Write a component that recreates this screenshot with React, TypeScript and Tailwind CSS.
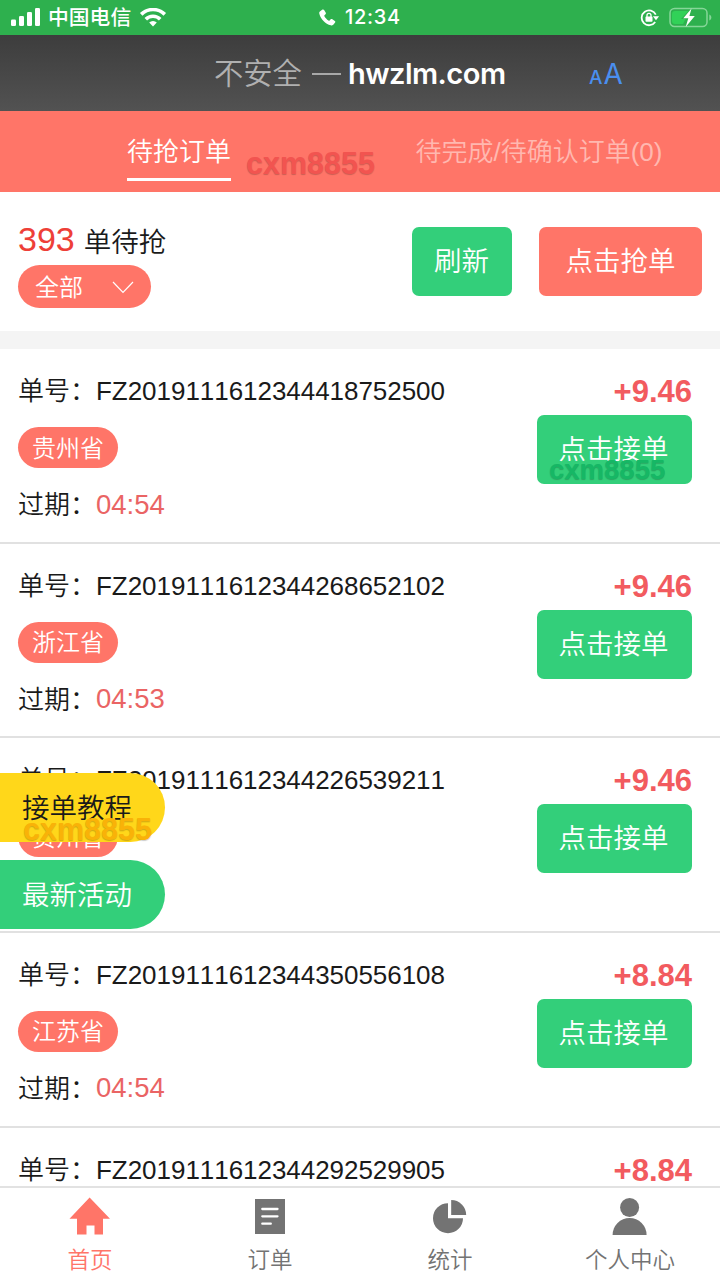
import type { ReactNode } from "react";

interface Order {
  no: string;
  province: string;
  expire: string;
  amount: string;
}

const orders: Order[] = [
  { no: "FZ2019111612344418752500", province: "贵州省", expire: "04:54", amount: "+9.46" },
  { no: "FZ2019111612344268652102", province: "浙江省", expire: "04:53", amount: "+9.46" },
  { no: "FZ2019111612344226539211", province: "贵州省", expire: "04:53", amount: "+9.46" },
  { no: "FZ2019111612344350556108", province: "江苏省", expire: "04:54", amount: "+8.84" },
  { no: "FZ2019111612344292529905", province: "", expire: "", amount: "+8.84" },
];

function StatusBar() {
  return (
    <div className="flex h-[35px] shrink-0 items-center bg-[#2eb04e] px-[10px] text-white">
      <div className="flex flex-1 items-center">
        <svg width="31" height="19" viewBox="0 0 31 19" fill="currentColor">
          <rect x="1" y="11.5" width="5" height="6.5" rx="1.3" />
          <rect x="9" y="8" width="5" height="10" rx="1.3" />
          <rect x="17" y="4" width="5" height="14" rx="1.3" />
          <rect x="25" y="0" width="5" height="18" rx="1.3" />
        </svg>
        <span className="ml-[7px] text-[20.8px] leading-[30px] font-medium">中国电信</span>
        <svg className="ml-[8px]" width="28" height="20" viewBox="0 0 28 20">
          <g fill="none" stroke="currentColor" strokeWidth="3.6">
            <path d="M2.2 6.4a16.8 16.8 0 0 1 23.6 0" />
            <path d="M6.8 11.2a10.2 10.2 0 0 1 14.4 0" />
          </g>
          <path d="M14 18.5l-3.8-3.9a5.500 5.500 0 0 1 7.600 0z" fill="currentColor" />
        </svg>
      </div>
      <div className="flex items-center">
        <svg width="17" height="17" viewBox="0 0 17 17" fill="currentColor">
          <path d="M1.2 2.2 3.5.6c.6-.4 1.2-.2 1.6.4l1.7 2.8c.3.6.2 1.1-.3 1.5l-1 .9c-.3.3-.3.6-.1 1 .9 1.7 2.3 3.2 4.1 4.3.4.3.8.2 1.1-.1l.9-1c.4-.5.9-.6 1.5-.3l2.8 1.8c.6.4.7 1 .3 1.5l-1.6 2.2c-.5.7-1.4 1-2.7.6C6.2 14.8 1.8 10.1.4 4.9c-.4-1.3-.1-2.2.8-2.7z" />
        </svg>
        <span className="ml-[9px] -mt-px font-[Inter] text-[20px] leading-[30px] font-medium tracking-[0.7px]">12:34</span>
      </div>
      <div className="flex flex-1 items-center justify-end">
        <svg width="20" height="18" viewBox="0 0 20 18">
          <path d="M15.2 13A7.4 7.4 0 1 1 15.800 5.700" fill="none" stroke="currentColor" strokeWidth="1.8" />
          <path d="M12.9 7.300h6.200L16 11.200z" fill="currentColor" />
          <rect x="5.500" y="7.600" width="7" height="5.200" rx="0.8" fill="currentColor" />
          <path d="M7 8V6.300a2 2 0 0 1 4 0V8" fill="none" stroke="currentColor" strokeWidth="1.300" />
        </svg>
        <svg className="-mr-[2px] ml-[9px]" width="43" height="22" viewBox="0 0 43 22">
          <rect x="1" y="1.500" width="37" height="18" rx="4.500" fill="none" stroke="#85d698" strokeWidth="1.500" />
          <path d="M40.300 7.500v6c1.400-.5 2-1.600 2-3s-.6-2.500-2-3z" fill="#85d698" />
          <path d="M6 4h13.500L12 12h4.500l-2.500 5H6a3 3 0 0 1-3-3V7a3 3 0 0 1 3-3z" fill="#31d158" />
          <path d="M22.500 1.500 14.300 11.300h5l-2.600 8.700 9.100-11h-5.400z" fill="white" />
        </svg>
      </div>
    </div>
  );
}

function AddressBar() {
  return (
    <div className="flex h-[76px] shrink-0 items-center bg-linear-to-b from-[#3d3d3d] to-[#525252] pt-[2px] pl-[214px]">
      <span className="text-[29.3px] leading-[40px] font-[350] text-[#b0b0b0]">不安全</span>
      <span className="ml-[10px] h-[2px] w-[29px] bg-[#a8a8a8]" />
      <span className="ml-[7px] w-[160px] font-[Inter] text-[29px] leading-[40px] font-semibold tracking-[-0.5px] text-white">
        hwzlm.com
      </span>
      <span className="mt-[4px] ml-[81px] flex items-baseline font-[Inter] leading-[40px] text-[#4a8ff0]">
        <span className="text-[19px] font-medium">A</span>
        <span className="ml-px text-[28px]">A</span>
      </span>
    </div>
  );
}

function Watermark({ className }: { className: string }) {
  return (
    <span
      className={`pointer-events-none absolute z-20 leading-none font-bold [text-shadow:0_1px_1px_rgba(0,0,0,0.2)] ${className}`}
    >
      cxm8855
    </span>
  );
}

function Tabs() {
  return (
    <div className="relative flex h-[81px] shrink-0 bg-[#ff7568] text-[26px]">
      <div className="flex flex-1 justify-center pr-[2px]">
        <div className="mt-[20px] h-[50px] border-b-[3px] border-white pt-px leading-[40px] font-[350] text-white">
          待抢订单
        </div>
      </div>
      <div className="flex flex-1 justify-center pr-[2px]">
        <div className="mt-[21px] h-[49px] leading-[40px] font-[350] text-[#ffb8b0]">待完成/待确认订单(0)</div>
      </div>
      <Watermark className="top-[37px] left-[246px] text-[30.5px] text-[#f25450]" />
    </div>
  );
}

function Summary() {
  return (
    <div className="flex h-[157px] shrink-0 items-start border-b-[18px] border-[#f4f4f4] px-[18px]">
      <div className="flex-1 pt-[29px]">
        <div className="flex h-[40px] items-center">
          <span className="-mt-[4px] text-[34px] leading-[40px] text-[#ee3f38]">393</span>
          <span className="ml-[9px] pt-[3px] text-[27.5px] leading-[40px] font-[350] text-[#1a1a1a]">单待抢</span>
        </div>
        <button
          type="button"
          className="mt-[4px] flex h-[43px] w-[133px] items-center rounded-full bg-[#ff7568] pt-[2px] pl-[17px] text-[24px] font-[350] text-white"
        >
          全部
          <svg className="ml-[29px]" width="22" height="13" viewBox="0 0 22 13">
            <path d="M1 1l10 10.5L21 1" fill="none" stroke="white" strokeWidth="1.2" />
          </svg>
        </button>
      </div>
      <button
        type="button"
        className="mt-[35px] h-[69px] w-[100px] rounded-[7px] bg-[#33cf7a] pr-[8px] pl-[7px] text-[27.5px] font-[350] text-white"
      >
        刷新
      </button>
      <button
        type="button"
        className="mt-[35px] ml-[27px] h-[69px] w-[163px] rounded-[7px] bg-[#ff7568] text-[27.5px] font-[350] text-white"
      >
        点击抢单
      </button>
    </div>
  );
}

function OrderRow({ order, children }: { order: Order; children?: ReactNode }) {
  return (
    <div className="relative flex h-[194.67px] shrink-0 justify-between border-b-2 border-[#e1e1e1] pr-[28px] pl-[18px]">
      <div className="pt-[24px] text-[26px] leading-[36px] font-[350] text-[#1a1a1a]">
        <div className="whitespace-nowrap">
          单号：<span className="tracking-[-0.04px]">{order.no}</span>
        </div>
        {order.province && (
          <div className="mt-[18px] flex h-[41px] w-[100px] items-center justify-center rounded-full bg-[#ff7568] pt-[2px] text-[24px] text-white">
            {order.province}
          </div>
        )}
        {order.expire && (
          <div className="mt-[19px] flex items-center">
            <span>过期：</span>
            <span className="-mt-px text-[27.5px] text-[#ea6464]">{order.expire}</span>
          </div>
        )}
      </div>
      <div className="flex flex-col items-end pt-[25px]">
        <span className="text-[31px] leading-[36px] font-bold text-[#f25b5f]">{order.amount}</span>
        <button
          type="button"
          className="mt-[5px] h-[69px] w-[155px] rounded-[7px] bg-[#33cf7a] pr-[2px] text-[27.5px] font-[350] text-white"
        >
          点击接单
        </button>
      </div>
      {children}
    </div>
  );
}

const navItems = [
  {
    label: "首页",
    icon: <path d="M19.6.5 40 21.8H33V37.5h-8.500v-9h-8v9H7V21.800H-.5z" />,
  },
  {
    label: "订单",
    icon: (
      <>
        <rect x="5" y="2" width="30" height="35" />
        <path d="M12.3 12h15.200M12.3 19.300h15.200M12.3 26.700h8.500" stroke="white" strokeWidth="2.3" strokeLinecap="round" />
      </>
    ),
  },
  {
    label: "统计",
    icon: (
      <>
        <path d="M18 6.200V21.200H33A15 15 0 1 1 18 6.200z" />
        <path d="M21.2 3A15 15 0 0 1 36.200 18h-15z" />
      </>
    ),
  },
  {
    label: "个人中心",
    icon: (
      <>
        <circle cx="19.6" cy="10.500" r="9.500" />
        <path d="M2.6 38a17 17 0 0 1 34 0z" />
      </>
    ),
  },
];

function BottomNav() {
  return (
    <div className="z-10 flex h-[94px] shrink-0 border-t-2 border-[#e2e2e2] bg-white">
      {navItems.map((item, i) => (
        <div
          key={item.label}
          className={`flex flex-1 flex-col items-center pt-[9px] ${i === 0 ? "text-[#ff7568]" : "text-[#737373]"}`}
        >
          <svg width="40" height="39" viewBox="0 0 40 39" fill="currentColor" className="overflow-visible">
            {item.icon}
          </svg>
          <span className="mt-[9px] text-[22.5px] leading-[32px] font-[350]">{item.label}</span>
        </div>
      ))}
    </div>
  );
}

export default function App() {
  return (
    <div className="relative flex h-[1280px] w-[720px] flex-col overflow-hidden bg-white font-['Liberation_Sans','Noto_Sans_CJK_SC',sans-serif] [font-kerning:none]">
      <StatusBar />
      <AddressBar />
      <Tabs />
      <Summary />
      <div className="flex min-h-0 flex-1 flex-col overflow-hidden">
        {orders.map((order, i) => (
          <OrderRow key={order.no} order={order}>
            {i === 0 && <Watermark className="top-[107px] left-[549px] text-[27.5px] text-[#16b765]" />}
          </OrderRow>
        ))}
      </div>
      <BottomNav />

      {/* 悬浮按钮 */}
      <div className="absolute top-[773px] left-0 flex w-[165px] flex-col gap-[18px] text-[27.5px] font-[350]">
        <div className="relative flex h-[69px] items-center rounded-r-full bg-[#ffd71a] pt-[2px] pl-[22px] text-[#1a1a1a]">
          接单教程
          <Watermark className="top-[41px] left-[23px] text-[30.5px] text-[#f9b208]" />
        </div>
        <div className="flex h-[69px] items-center rounded-r-full bg-[#33cf7a] pt-[3px] pl-[22px] text-white">最新活动</div>
      </div>
    </div>
  );
}
